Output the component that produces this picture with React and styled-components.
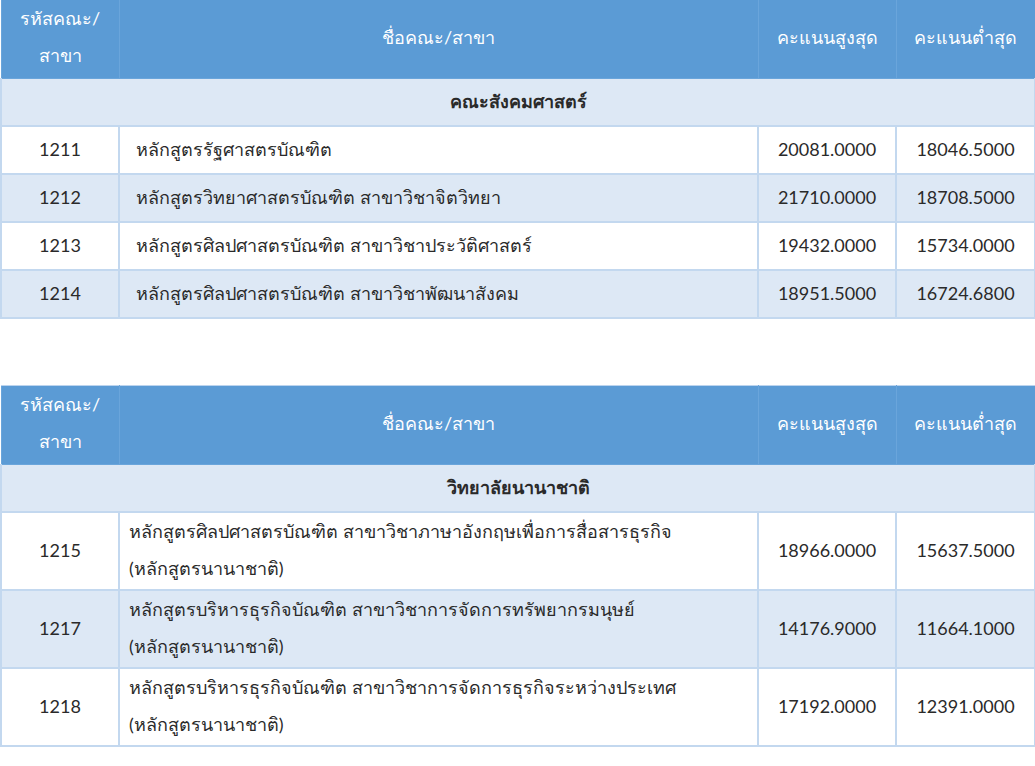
import React from "react";
import styled, { createGlobalStyle } from "styled-components";

const Global = createGlobalStyle`
  html, body { margin: 0; padding: 0; background: #ffffff; }
  body { font-family: "Lato", "Noto Sans", "DejaVu Sans", sans-serif; color: #2a2a2a; }
`;

const Page = styled.div`
  display: flex;
  flex-direction: column;
  gap: 66px;
  width: 1034px;
`;

const Table = styled.table`
  width: 1034px;
  border-collapse: collapse;
  table-layout: fixed;
  font-size: 18px;
`;

const HeadCell = styled.th`
  background: #5b9bd5;
  color: #ffffff;
  font-weight: 400;
  height: 74px;
  line-height: 37px;
  padding: 0 ${(p) => (p.$narrow ? "12px" : "8px")} 4px;
  text-align: center;
  vertical-align: middle;
  border: 1px solid #6aa5db;
  border-top: ${(p) => (p.$topLine ? "1px solid #bcd4ee" : "none")};
`;

const SectionCell = styled.td`
  background: #dde8f5;
  font-weight: 700;
  text-align: center;
  height: 44px;
  line-height: 38px;
  padding: 0 0 2px;
  border: 2px solid #c3d8ef;
  border-top: none;
`;

const Row = styled.tr`
  background: ${(p) => (p.$alt ? "#dde8f5" : "#ffffff")};
`;

const Cell = styled.td`
  height: 44px;
  line-height: 37px;
  font-weight: 400;
  padding: 0 ${(p) => p.$pad || "10px"} 2px;
  text-align: ${(p) => (p.$left ? "left" : "center")};
  vertical-align: middle;
  border: 2px solid #c3d8ef;
`;

const data = [
  {
    header: "คณะสังคมศาสตร์",
    pad: "16px",
    rows: [
      ["1211", "หลักสูตรรัฐศาสตรบัณฑิต", "20081.0000", "18046.5000"],
      ["1212", "หลักสูตรวิทยาศาสตรบัณฑิต สาขาวิชาจิตวิทยา", "21710.0000", "18708.5000"],
      ["1213", "หลักสูตรศิลปศาสตรบัณฑิต สาขาวิชาประวัติศาสตร์", "19432.0000", "15734.0000"],
      ["1214", "หลักสูตรศิลปศาสตรบัณฑิต สาขาวิชาพัฒนาสังคม", "18951.5000", "16724.6800"],
    ],
  },
  {
    header: "วิทยาลัยนานาชาติ",
    pad: "9px",
    topLine: true,
    rows: [
      ["1215", "หลักสูตรศิลปศาสตรบัณฑิต สาขาวิชาภาษาอังกฤษเพื่อการสื่อสารธุรกิจ (หลักสูตรนานาชาติ)", "18966.0000", "15637.5000"],
      ["1217", "หลักสูตรบริหารธุรกิจบัณฑิต สาขาวิชาการจัดการทรัพยากรมนุษย์ (หลักสูตรนานาชาติ)", "14176.9000", "11664.1000"],
      ["1218", "หลักสูตรบริหารธุรกิจบัณฑิต สาขาวิชาการจัดการธุรกิจระหว่างประเทศ (หลักสูตรนานาชาติ)", "17192.0000", "12391.0000"],
    ],
  },
];

function ScoreTable({ section }) {
  const twoLine = section.topLine;
  return (
    <Table>
      <colgroup>
        <col style={{ width: 118 }} />
        <col style={{ width: 639 }} />
        <col style={{ width: 138 }} />
        <col style={{ width: 139 }} />
      </colgroup>
      <thead>
        <tr>
          <HeadCell $narrow $topLine={section.topLine}>รหัสคณะ/ สาขา</HeadCell>
          <HeadCell $topLine={section.topLine}>ชื่อคณะ/สาขา</HeadCell>
          <HeadCell $topLine={section.topLine}>คะแนนสูงสุด</HeadCell>
          <HeadCell $topLine={section.topLine}>คะแนนต่ำสุด</HeadCell>
        </tr>
      </thead>
      <tbody>
        <tr>
          <SectionCell colSpan={4}>{section.header}</SectionCell>
        </tr>
        {section.rows.map((r, i) => {
          let name = r[1];
          let second = null;
          if (twoLine) {
            const idx = name.lastIndexOf(" (");
            second = name.slice(idx + 1);
            name = name.slice(0, idx);
          }
          return (
            <Row key={r[0]} $alt={i % 2 === 1}>
              <Cell>{r[0]}</Cell>
              <Cell $left $pad={section.pad}>
                {name}
                {second && <br />}
                {second}
              </Cell>
              <Cell>{r[2]}</Cell>
              <Cell>{r[3]}</Cell>
            </Row>
          );
        })}
      </tbody>
    </Table>
  );
}

export default function App() {
  return (
    <>
      <Global />
      <Page>
        {data.map((s) => (
          <ScoreTable key={s.header} section={s} />
        ))}
      </Page>
    </>
  );
}
